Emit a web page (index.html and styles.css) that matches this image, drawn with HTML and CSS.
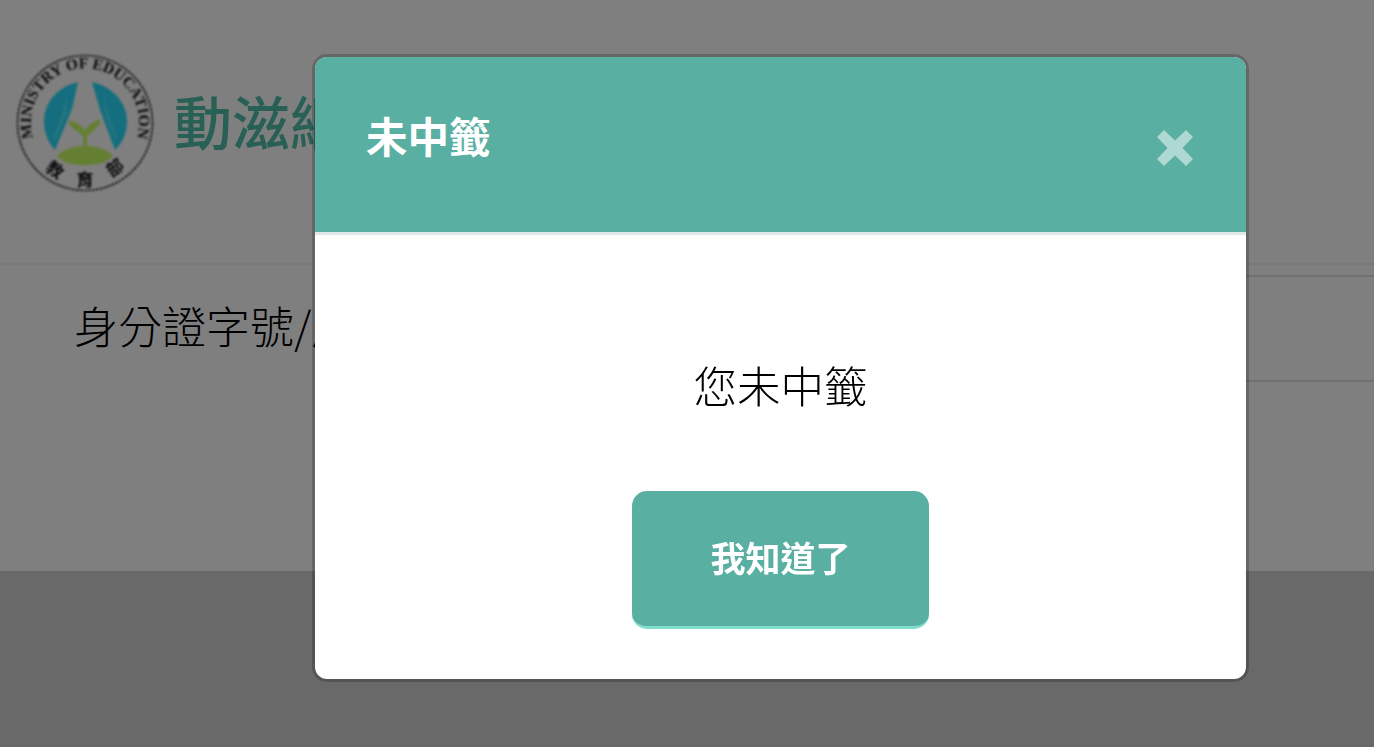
FILE: index.html
```html
<!DOCTYPE html>
<html lang="zh-TW">
<head>
    <meta charset="UTF-8">
    <meta name="viewport" content="width=device-width, initial-scale=1.0">
    <title>動滋網</title>
    <link rel="stylesheet" href="styles.css">
</head>
<body>
    <div class="page">
        <header class="site-header">
            <svg class="logo" viewBox="0 0 140 140" width="140" height="140" aria-label="教育部">
                <defs>
                    <path id="ringText" d="M 22 94 A 54 54 0 1 1 118 94"></path>
                </defs>
                <circle cx="70" cy="70" r="67.5" fill="none" stroke="#222" stroke-width="1.6" stroke-dasharray="3 1"></circle>
                <text class="logo-ring"><textPath href="#ringText" startOffset="50%" text-anchor="middle">MINISTRY OF EDUCATION</textPath></text>
                <path d="M63 29 C45 33 29 48 29 68 C29 80 33 89 40 97 L57 56 Z" fill="#28dcff"></path>
                <path d="M77 29 C95 33 112 48 112 68 C112 80 108 89 100 97 L85 57 Z" fill="#28dcff"></path>
                <path d="M52 42 L47 60 L38 84 L40 88 L52 60 Z" fill="#48e8ff"></path>
                <path d="M88 42 L94 62 L102 84 L100 88 L90 62 Z" fill="#48e8ff"></path>
                <path d="M68 84 C64 78 55 76 53 67 C60 69 67 71 70 78 C73 71 79 69 86 66 C84 75 76 79 72 84 L72 95 L68 95 Z" fill="#c8ff64"></path>
                <path d="M42 103 C48 96 60 93 70 93 C81 93 92 96 98 103 C92 110 82 112 70 112 C58 112 48 110 42 103 Z" fill="#c8ff64"></path>
                <text class="logo-name" x="40" y="123" transform="rotate(35 40 117)">教</text>
                <text class="logo-name" x="70" y="133">育</text>
                <text class="logo-name" x="100" y="121" transform="rotate(-35 100 115)">部</text>
            </svg>
            <div class="site-name">動滋網</div>
        </header>

        <section class="content">
            <div class="id-row">
                <label class="id-label">身分證字號/居留證號</label>
                <div class="id-input"></div>
            </div>
        </section>

        <footer class="site-footer"></footer>
    </div>

    <div class="backdrop"></div>

    <div class="modal">
        <div class="modal-header">
            <h2 class="modal-title">未中籤</h2>
            <svg class="modal-close" viewBox="0 0 36 36" width="36" height="36" aria-label="關閉">
                <path d="M7 0 L18 10.5 L29 0 L36 7 L25.5 18 L36 29 L29 36 L18 25.5 L7 36 L0 29 L10.5 18 L0 7 Z"></path>
            </svg>
        </div>
        <div class="modal-body">
            <p class="modal-text">您未中籤</p>
            <button class="modal-btn">我知道了</button>
        </div>
    </div>
</body>
</html>
```

FILE: styles.css
```css
* {
    box-sizing: border-box;
}
html, body {
    margin: 0;
    height: 100%;
    overflow: hidden;
}
body {
    font-family: "Noto Sans CJK TC", "Noto Sans", sans-serif;
    background-color: #fff;
}
.page {
    display: flex;
    flex-direction: column;
    height: 747px;
}
.site-header {
    display: flex;
    align-items: center;
    gap: 19px;
    height: 265px;
    padding: 0 0 17px 15px;
    border-bottom: 2px solid #f2f2f2;
}
.logo {
    flex: none;
    filter: blur(0.8px);
}
.logo-ring {
    font-family: "Liberation Serif", serif;
    font-size: 15.5px;
    font-weight: bold;
    fill: #111;
}
.logo-name {
    font-size: 17px;
    font-weight: bold;
    text-anchor: middle;
    fill: #111;
}
.site-name {
    margin-top: -6px;
    font-size: 58px;
    font-weight: 500;
    line-height: 1;
    color: #50c0ac;
    filter: blur(0.7px);
}
.content {
    height: 306px;
}
.id-row {
    display: flex;
    padding-top: 10px;
}
.id-label {
    width: 900px;
    padding: 20px 0 0 74px;
    font-size: 44px;
    font-weight: 300;
    line-height: 60px;
    color: #000;
    white-space: nowrap;
}
.id-input {
    flex: 1;
    height: 107px;
    border: 2px solid #e0e0e0;
    border-right: none;
}
.site-footer {
    flex: 1;
    background-color: #d2d2d2;
}
.backdrop {
    position: fixed;
    inset: 0;
    background-color: rgba(0, 0, 0, 0.5);
}
.modal {
    position: fixed;
    left: 312px;
    top: 54px;
    width: 937px;
    height: 628px;
    background-color: #fff;
    background-clip: padding-box;
    border: 3px solid rgba(0, 0, 0, 0.2);
    border-radius: 15px;
    display: flex;
    flex-direction: column;
    overflow: hidden;
}
.modal-header {
    display: flex;
    justify-content: space-between;
    height: 178px;
    padding: 46px 53px 0 51px;
    background-color: #59afa2;
    border-bottom: 3px solid #dfe9e9;
}
.modal-title {
    margin: 0;
    font-size: 41.5px;
    font-weight: 700;
    line-height: 64px;
    color: #fff;
}
.modal-close {
    margin-top: 27px;
    fill: #aed8d2;
}
.modal-body {
    flex: 1;
    display: flex;
    flex-direction: column;
    align-items: center;
}
.modal-text {
    margin: 115px 0 0;
    font-size: 43.5px;
    font-weight: 300;
    line-height: 70px;
    color: #000;
}
.modal-btn {
    width: 297px;
    height: 138px;
    margin-top: 71px;
    padding-bottom: 6px;
    font-family: inherit;
    font-size: 35px;
    font-weight: 700;
    color: #fff;
    background-color: #59afa2;
    border: none;
    border-bottom: 3px solid #7fdfcc;
    border-radius: 15px;
}
```
